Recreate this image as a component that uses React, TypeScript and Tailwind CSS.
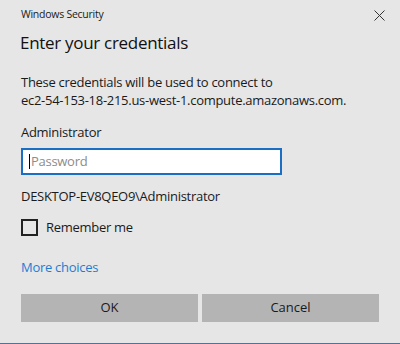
import React from "react";

export default function App() {
  return (
    <div
      className="w-[400px] h-[344px] bg-[#e6e6e6] flex flex-col text-[#000] border-b border-[#2b79d0] overflow-hidden"
      style={{ fontFamily: '"Open Sans", "Noto Sans", sans-serif' }}
    >
      <div className="flex items-center justify-between pl-[21px] pr-[15px] pt-[6px] h-[22px]">
        <span className="text-[10.5px] leading-[14px] tracking-[-0.25px] text-[#1a1a1a]">Windows Security</span>
        <svg width="11" height="11" viewBox="0 0 11 11" className="mt-[2px]">
          <path d="M0.5 0.5 L10.5 10.5 M10.5 0.5 L0.5 10.5" stroke="#333" strokeWidth="1" />
        </svg>
      </div>
      <div className="pl-[20px] mt-[9px] text-[17px] leading-[24px] tracking-[-0.3px] text-[#111]">Enter your credentials</div>
      <div className="pl-[21px] mt-[18px] text-[13px] leading-[18px] tracking-[-0.28px] text-[#1a1a1a]">
        <div>These credentials will be used to connect to</div>
        <div>ec2-54-153-18-215.us-west-1.compute.amazonaws.com.</div>
      </div>
      <div className="pl-[21px] mt-[14px] text-[13px] leading-[18px] tracking-[-0.28px] text-[#1a1a1a]">Administrator</div>
      <div className="pl-[21px] mt-[7px]">
        <div className="w-[261px] h-[27px] bg-white border-2 border-[#1a6fc4] flex items-center pl-[6px]">
          <div className="w-px h-[15px] bg-black" />
          <span className="text-[13px] tracking-[-0.28px] text-[#8c8c8c] ml-[1px]">Password</span>
        </div>
      </div>
      <div className="pl-[21px] mt-[12px] text-[13px] leading-[18px] tracking-[-0.28px] text-[#1a1a1a]">DESKTOP-EV8QEO9\Administrator</div>
      <div className="pl-[21px] mt-[13px] flex items-center gap-[8px]">
        <div className="w-[17px] h-[17px] border-2 border-[#222] bg-transparent" />
        <span className="text-[13px] leading-[18px] tracking-[-0.28px] text-[#1a1a1a]">Remember me</span>
      </div>
      <div className="pl-[21px] mt-[22px] text-[13px] leading-[18px] tracking-[-0.28px] text-[#1a7fd4]">More choices</div>
      <div className="pl-[21px] mt-[18px] flex gap-[4px]">
        <button className="w-[177px] h-[28px] bg-[#b4b4b4] text-[13px] text-[#1a1a1a]">OK</button>
        <button className="w-[177px] h-[28px] bg-[#b4b4b4] text-[13px] text-[#1a1a1a]">Cancel</button>
      </div>
    </div>
  );
}
